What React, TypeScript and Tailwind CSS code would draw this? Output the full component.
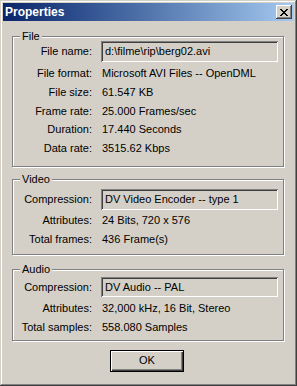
import React from "react";

type Row = { label: string; value: string; boxed?: boolean };

const fileRows: Row[] = [
  { label: "File name:", value: "d:\\filme\\rip\\berg02.avi", boxed: true },
  { label: "File format:", value: "Microsoft AVI Files -- OpenDML" },
  { label: "File size:", value: "61.547 KB" },
  { label: "Frame rate:", value: "25.000 Frames/sec" },
  { label: "Duration:", value: "17.440 Seconds" },
  { label: "Data rate:", value: "3515.62 Kbps" },
];

const videoRows: Row[] = [
  { label: "Compression:", value: "DV Video Encoder -- type 1", boxed: true },
  { label: "Attributes:", value: "24 Bits, 720 x 576" },
  { label: "Total frames:", value: "436 Frame(s)" },
];

const audioRows: Row[] = [
  { label: "Compression:", value: "DV Audio -- PAL", boxed: true },
  { label: "Attributes:", value: "32,000 kHz, 16 Bit, Stereo" },
  { label: "Total samples:", value: "558.080 Samples" },
];

const BoxRow = ({ label, value, h }: { label: string; value: string; h: string }) => (
  <div className="flex items-center">
    <div className="w-[79px] text-right whitespace-nowrap">{label}</div>
    <div
      className={`ml-[9px] w-[177px] ${h} flex items-center pl-[4px] bg-[#d4d0c8] shadow-[inset_1px_1px_#808080,inset_-1px_-1px_#fff,inset_2px_2px_#404040,inset_-2px_-2px_#d4d0c8] whitespace-nowrap`}
    >
      {value}
    </div>
  </div>
);

const TextRow = ({ label, value }: { label: string; value: string }) => (
  <div className="flex h-[18.75px] leading-[18.75px]">
    <div className="w-[79px] text-right whitespace-nowrap">{label}</div>
    <div className="ml-[10px] whitespace-nowrap">{value}</div>
  </div>
);

const Group = ({
  title,
  className,
  children,
}: {
  title: string;
  className: string;
  children: React.ReactNode;
}) => (
  <div
    className={`relative border border-[#808080] shadow-[inset_1px_1px_#fff,1px_1px_#fff] ${className}`}
  >
    <div className="absolute left-[7px] top-[-8px] px-[2px] bg-[#d4d0c8] leading-[14px]">
      {title}
    </div>
    {children}
  </div>
);

export default function App() {
  return (
    <div className="w-[297px] h-[386px] bg-[#d4d0c8] p-[3px] flex flex-col text-[11px] text-black font-['Liberation_Sans',Arial,sans-serif] shadow-[inset_-1px_-1px_#404040,inset_1px_1px_#d4d0c8,inset_-2px_-2px_#808080,inset_2px_2px_#fff]">
      <div className="h-[18px] flex items-center justify-between bg-gradient-to-r from-[#0a246a] to-[#a6caf0] pl-[2px] pr-[2px]">
        <span className="text-white font-bold text-[12px] leading-none">Properties</span>
        <div className="w-[16px] h-[14px] bg-[#d4d0c8] flex items-center justify-center shadow-[inset_-1px_-1px_#404040,inset_1px_1px_#fff,inset_-2px_-2px_#808080]">
          <svg width="8" height="7" viewBox="0 0 8 7" shapeRendering="crispEdges">
            <path
              d="M0 0h2v1h-2zM6 0h2v1h-2zM1 1h2v1h-2zM5 1h2v1h-2zM2 2h4v1h-4zM3 3h2v1h-2zM2 4h4v1h-4zM1 5h2v1h-2zM5 5h2v1h-2zM0 6h2v1h-2zM6 6h2v1h-2z"
              fill="#000"
            />
          </svg>
        </div>
      </div>

      <div className="flex flex-col ml-[9px] mr-[10px]">
        <Group title="File" className="mt-[15px] pt-[4px] pb-[8px]">
          <BoxRow label={fileRows[0].label} value={fileRows[0].value} h="h-[21px]" />
          <div className="mt-[2px]">
            {fileRows.slice(1).map((r) => (
              <TextRow key={r.label} label={r.label} value={r.value} />
            ))}
          </div>
        </Group>

        <Group title="Video" className="mt-[12px] pt-[9px] pb-[6px]">
          <BoxRow label={videoRows[0].label} value={videoRows[0].value} h="h-[21px]" />
          <div className="mt-[1px]">
            {videoRows.slice(1).map((r) => (
              <TextRow key={r.label} label={r.label} value={r.value} />
            ))}
          </div>
        </Group>

        <Group title="Audio" className="mt-[14px] pt-[7px] pb-[3px]">
          <BoxRow label={audioRows[0].label} value={audioRows[0].value} h="h-[20px]" />
          <div className="mt-[2px]">
            {audioRows.slice(1).map((r) => (
              <TextRow key={r.label} label={r.label} value={r.value} />
            ))}
          </div>
        </Group>
      </div>

      <button className="mt-[9px] ml-[107px] w-[74px] h-[22px] border border-black bg-[#d4d0c8] shadow-[inset_1px_1px_#fff,inset_-1px_-1px_#404040,inset_-2px_-2px_#808080] flex items-center justify-center leading-none">
        OK
      </button>
    </div>
  );
}
